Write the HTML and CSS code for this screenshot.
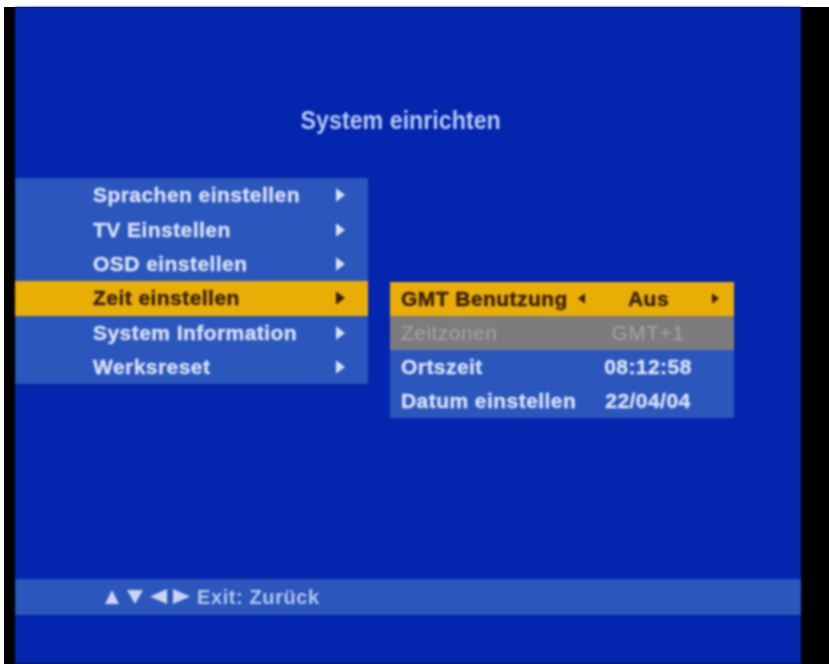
FILE: index.html

```html
<!DOCTYPE html>
<html lang="de">
  <head>
    <meta charset="UTF-8" />
    <meta name="viewport" content="width=device-width, initial-scale=1.0" />
    <title>System einrichten</title>
    <link rel="stylesheet" href="styles.css">
  </head>
  <body>
    <div class="tv">
      <div class="screen">
        <h1 class="title"><span>System einrichten</span></h1>

        <div class="menus">
          <div class="menu">
            <div class="menu-row">
              <span>Sprachen einstellen</span>
              <svg class="arrow" viewBox="0 0 8 12"><path d="M0 0 8 6 0 12z"/></svg>
            </div>
            <div class="menu-row">
              <span>TV Einstellen</span>
              <svg class="arrow" viewBox="0 0 8 12"><path d="M0 0 8 6 0 12z"/></svg>
            </div>
            <div class="menu-row">
              <span>OSD einstellen</span>
              <svg class="arrow" viewBox="0 0 8 12"><path d="M0 0 8 6 0 12z"/></svg>
            </div>
            <div class="menu-row active">
              <span>Zeit einstellen</span>
              <svg class="arrow" viewBox="0 0 8 12"><path d="M0 0 8 6 0 12z"/></svg>
            </div>
            <div class="menu-row">
              <span>System Information</span>
              <svg class="arrow" viewBox="0 0 8 12"><path d="M0 0 8 6 0 12z"/></svg>
            </div>
            <div class="menu-row">
              <span>Werksreset</span>
              <svg class="arrow" viewBox="0 0 8 12"><path d="M0 0 8 6 0 12z"/></svg>
            </div>
          </div>

          <div class="submenu">
            <div class="sub-row active">
              <span class="sub-label">GMT Benutzung</span>
              <svg class="arrow-small" viewBox="0 0 8 12"><path d="M8 0 0 6 8 12z"/></svg>
              <span class="sub-value">Aus</span>
              <svg class="arrow-small" viewBox="0 0 8 12"><path d="M0 0 8 6 0 12z"/></svg>
            </div>
            <div class="sub-row disabled">
              <span class="sub-label">Zeitzonen</span>
              <span class="sub-value">GMT+1</span>
            </div>
            <div class="sub-row">
              <span class="sub-label">Ortszeit</span>
              <span class="sub-value">08:12:58</span>
            </div>
            <div class="sub-row">
              <span class="sub-label">Datum einstellen</span>
              <span class="sub-value">22/04/04</span>
            </div>
          </div>
        </div>

        <div class="hint-bar">
          <svg class="hint-arrows" viewBox="0 0 86 20">
            <path d="M1 17 8 3 15 17z"/>
            <path d="M23 3H39L31 17z"/>
            <path d="M63 2V17L46 9.500z"/>
            <path d="M69 2V17L86 9.500z"/>
          </svg>
          <span class="hint-text">Exit: Zurück</span>
        </div>
      </div>
    </div>
  </body>
</html>
```

FILE: styles.css

```css
/* Page */
body {
  margin: 0;
  height: 664px;
  overflow: hidden;
  background-color: #fff;
  font-family: "Liberation Sans", Arial, sans-serif;
}

.tv {
  box-sizing: border-box;
  height: 657px;
  margin: 7px 0 0 4px;
  padding: 0 28px 0 11px;
  background-color: #000;
}

.screen {
  height: 100%;
  background-color: #0425ae;
  overflow: hidden;
  filter: blur(0.8px);
}

/* Title */
.title {
  margin: 0;
  padding: 96px 14px 0 0;
  height: 75px;
  text-align: center;
  font-size: 25px;
  line-height: 34px;
  font-weight: bold;
  color: #b4c8f0;
}

.title span {
  display: inline-block;
  transform: scaleX(0.93);
}

/* Menus */
.menus {
  display: flex;
  align-items: flex-start;
  gap: 22px;
}

.menu {
  width: 353px;
  background-color: #2b56bb;
}

.menu-row {
  display: flex;
  justify-content: space-between;
  align-items: center;
  height: 34.4px;
  padding: 0 23px 0 78px;
  font-size: 21px;
  font-weight: bold;
  letter-spacing: 0.45px;
  color: #d6e0f6;
  -webkit-text-stroke: 0.4px currentColor;
}

.arrow {
  width: 9px;
  height: 14px;
  fill: #d6e0f6;
}

.active {
  background-color: #e8ae06;
  color: #3b1f08;
}

.menu-row.active {
  color: #3b1f08;
}

.active .arrow,
.active .arrow-small {
  fill: #3b1f08;
}

.submenu {
  width: 344px;
  margin-top: 103.5px;
  background-color: #2b56bb;
}

.sub-row {
  display: flex;
  align-items: center;
  height: 34.2px;
  padding-left: 11px;
  font-size: 21px;
  font-weight: bold;
  letter-spacing: 0.45px;
  color: #d6e0f6;
  -webkit-text-stroke: 0.4px currentColor;
}

.sub-row.active {
  background-color: #e8ae06;
  color: #3b1f08;
}

.sub-row.disabled {
  background-color: #7c7c7c;
  color: #a3a3a3;
  font-weight: normal;
  -webkit-text-stroke: 0;
}

.sub-label {
  flex: none;
  width: 197px;
  white-space: nowrap;
}

.sub-row.active .sub-label {
  width: 177px;
}

.sub-value {
  flex: none;
  width: 100px;
  text-align: center;
}

.arrow-small {
  flex: none;
  width: 7px;
  height: 11px;
}

.sub-row.active .sub-value {
  width: 127px;
}

/* Bottom hint bar */
.hint-bar {
  display: flex;
  align-items: center;
  gap: 7px;
  height: 36px;
  margin-top: 161px;
  padding-left: 89px;
  background-color: #2b56bb;
  color: #b4c8f0;
}

.hint-arrows {
  width: 86px;
  height: 20px;
  fill: #c9d6ef;
}

.hint-text {
  font-size: 20px;
  font-weight: bold;
  letter-spacing: 0.6px;
}
```
